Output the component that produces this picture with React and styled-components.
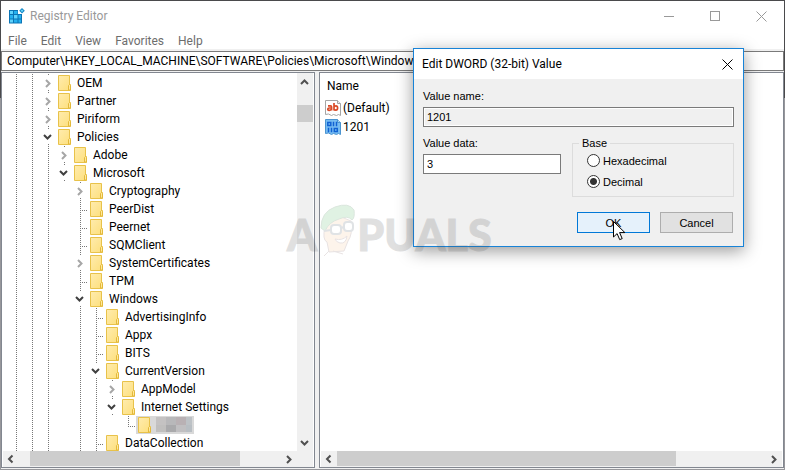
import React from "react";
import styled, { createGlobalStyle, css } from "styled-components";

const UI = 'Roboto, "Open Sans", sans-serif';
const DIALOG = '"Liberation Sans", Arial, sans-serif';

const GlobalStyle = createGlobalStyle`
  * { box-sizing: border-box; }
  body { margin: 0; font: 12px/18px ${UI}; color: #000; }
  button, input { font: inherit; color: inherit; margin: 0; }
  button { border: 0; padding: 0; background: none; }
`;

const Desktop = styled.div`
  min-height: 100vh;
  display: flex;
  padding: 1px;
  background: linear-gradient(#4a4a4c 0 98px, #97979b 98px);
`;

const Window = styled.main`
  position: relative;
  flex: 1;
  min-width: 0;
  display: flex;
  flex-direction: column;
  background: #f0f0f0;
`;

const TitleBar = styled.header`
  display: flex;
  align-items: center;
  height: 30px;
  padding-left: 8px;
  background: #fff;
  color: #999;
`;

const Title = styled.h1`
  flex: 1;
  margin: 0;
  padding-left: 5px;
  font-size: 12px;
  font-weight: 400;
`;

const CaptionButton = styled.button`
  display: grid;
  place-items: center;
  width: 46px;
  height: 30px;
`;

const MenuBar = styled.nav`
  display: flex;
  gap: 14px;
  height: 18px;
  padding: 1px 7px 0;
  margin-bottom: 2px;
  background: #fff;
  color: #6d6d6d;
`;

const MenuItem = styled.button`
  line-height: 18px;
`;

const AddressBar = styled.input`
  width: 100%;
  height: 20px;
  padding: 0 5px;
  border: 1px solid #7a7a7a;
  background: #fff;
  margin-bottom: 1px;
  outline: 0;
`;

const Panes = styled.div`
  flex: 1;
  min-height: 0;
  display: flex;
  gap: 4px;
  padding-bottom: 1px;
`;

const Pane = styled.section`
  display: flex;
  flex-direction: column;
  min-width: 0;
  border: 1px solid #828790;
  padding: 0 1px;
  background: #fff;
  ${(p) => (p.$fixed ? "width: 314px; flex: none;" : "flex: 1;")}
`;

const PaneBody = styled.div`
  flex: 1 1 0;
  min-height: 0;
  display: flex;
`;

const Tree = styled.ul`
  flex: 1;
  min-width: 0;
  overflow: hidden;
  margin: 0;
  padding: 1px 0 0 5px;
  list-style: none;
`;

const TreeRow = styled.li`
  display: flex;
  height: 18px;
`;

const dotsDown = "repeating-linear-gradient(#777 0 1px, transparent 1px 2px)";
const dotsAcross = "repeating-linear-gradient(90deg, #777 0 1px, transparent 1px 2px)";

const Guide = styled.span`
  flex: none;
  width: 16px;
  height: 18px;
  background: ${(p) => {
    const line = `${dotsDown} 8px 0 / 1px ${p.$half ? 10 : 18}px no-repeat`;
    if (p.$blank) return "none";
    return p.$branch ? `${line}, ${dotsAcross} 8px 10px / 8px 1px no-repeat` : line;
  }};
`;

const Toggle = styled.button`
  display: grid;
  place-items: center;
  width: 16px;
  height: 14px;
  margin-top: 2px;
  background: #fff;
`;

const Node = styled.span`
  display: flex;
  height: 18px;
  padding: 0 3px 0 2px;
  ${(p) => p.$selected && css`background: #d9d9d9; padding-right: 2px;`}
`;

const NodeLabel = styled.span`
  padding-left: 6px;
  line-height: 18px;
  white-space: nowrap;
`;

const Mosaic = styled.span`
  display: grid;
  grid-template-columns: repeat(4, 10px);
  width: 36px;
  height: 15px;
  margin: 1px 0 0 5px;
  overflow: hidden;
`;

const Tile = styled.span`
  background: ${(p) => p.$tone};
`;

const ScrollBar = styled.div`
  display: flex;
  flex: none;
  background: #f0f0f0;
  ${(p) =>
    p.$vertical
      ? "flex-direction: column; width: 16px; padding-top: 2px;"
      : `height: 16px; padding-right: ${p.$corner ? 16 : 0}px;`}
`;

const ScrollButton = styled.button`
  display: grid;
  place-items: center;
  flex: none;
  width: 16px;
  height: 16px;
`;

const Track = styled.div`
  flex: 1;
  padding: ${(p) => p.$inset || "0"};
`;

const Thumb = styled.div`
  background: #cdcdcd;
  width: ${(p) => p.$width || "100%"};
  height: ${(p) => p.$height || "15px"};
`;

const Values = styled.table`
  align-self: flex-start;
  border-collapse: collapse;
  margin: 2px 0 0 4px;

  th, td { padding: 0; height: 19px; font-weight: 400; text-align: left; }
  th { height: 23px; padding: 0 0 2px 2px; }
`;

const ValueName = styled.span`
  display: flex;
  align-items: center;
  gap: 2px;
`;

const Dialog = styled.form`
  position: absolute;
  top: 47px;
  right: 40px;
  width: 331px;
  border: 1px solid #1883d7;
  background: #f0f0f0;
  box-shadow: 0 4px 16px rgba(0, 0, 0, 0.4);
  font: 12px/14px ${DIALOG};
`;

const DialogBar = styled.div`
  display: flex;
  align-items: center;
  justify-content: space-between;
  height: 30px;
  padding: 0 8px;
  background: #fff;
  font: 12px/18px ${UI};
`;

const DialogTitle = styled.h2`
  margin: 0;
  font-size: 12px;
  font-weight: 400;
`;

const DialogClose = styled.button`
  display: grid;
  place-items: center;
  width: 15px;
  height: 15px;
`;

const DialogBody = styled.div`
  padding: 10px 9px 13px;
  font-size: 11px;
`;

const Field = styled.label`
  display: block;
`;

const TextBox = styled.input`
  display: block;
  width: 100%;
  height: 20px;
  margin-top: 4px;
  padding: 0 3px;
  border: 1px solid #7a7a7a;
  border-radius: 0;
  outline: 0;
  background: ${(p) => (p.readOnly ? "#f0f0f0" : "#fff")};
  box-shadow: inset 0 0 0 1px #fff;
`;

const FieldRow = styled.div`
  display: grid;
  grid-template-columns: 138px 1fr;
  gap: 11px;
  margin-top: 9px;
`;

const Group = styled.fieldset`
  margin: 0;
  padding: 0 14px 4px;
  min-width: 0;
  border: 1px solid #dcdcdc;

  legend { margin-left: -8px; padding: 0 3px; }
`;

const RadioRow = styled.label`
  display: flex;
  align-items: center;
  gap: 3px;
  height: 21px;
`;

const Radio = styled.input`
  appearance: none;
  width: 13px;
  height: 13px;
  border: 1px solid #333;
  border-radius: 50%;
  background: #fff;

  &:checked { background: radial-gradient(circle, #333 0 3px, #fff 4px); }
`;

const Actions = styled.div`
  display: flex;
  justify-content: flex-end;
  gap: 10px;
  padding: 15px 1px 0 0;
`;

const PushButton = styled.button`
  width: 73px;
  height: 21px;
  border: 1px solid ${(p) => (p.$primary ? "#0078d7" : "#adadad")};
  background: ${(p) => (p.$primary ? "#e5f1fb" : "#e1e1e1")};
`;

const Pointer = styled.svg`
  position: absolute;
  right: 158px;
  top: 220px;
  pointer-events: none;
`;

const Watermark = styled.div`
  position: absolute;
  left: 286px;
  top: 203px;
  display: flex;
  align-items: flex-end;
  opacity: 0.16;
  pointer-events: none;
  font: 900 43px/42px Lato, sans-serif;
  color: #444;
  -webkit-text-stroke: 1px #444;
`;

const stroke = { fill: "none", strokeWidth: 2 };

const Arrow = ({ dir, color = "#505050" }) => {
  const d = {
    up: "M1 6 4.500 2.500 8 6",
    down: "M1 3 4.5 6.5 8 3",
    left: "M6.5 1.5 3 5 6.5 8.5",
    right: "M3 2 6.500 5.500 3 9",
  }[dir];
  return (
    <svg width="10" height="10" viewBox="0 0 10 10" {...stroke} stroke={color}>
      <path d={d} />
    </svg>
  );
};

const Folder = () => (
  <svg width="13" height="18" viewBox="0 0 13 18">
    <defs>
      <linearGradient id="paper" x2="1" y2="1">
        <stop stopColor="#ffecae" />
        <stop offset="1" stopColor="#fddf7c" />
      </linearGradient>
    </defs>
    <path d="M.5 1.5h11v9h1v6H.5z" fill="url(#paper)" stroke="#e8c24a" />
    <path d="M10.5 16V11.5l1-1 1 1V16z" fill="#ffe89b" stroke="#e3b93b" />
  </svg>
);

const RegistryIcon = () => (
  <svg width="16" height="16" viewBox="0 0 16 16">
    <path d="M0 2h9v4h4v9.500H0z" fill="#0b74b5" />
    <path d="M1 3h3v3H1zM1 11.500h3v3H1zM5 7h3.500v3.500H5z" fill="#5fd2fb" />
    <path d="M5 3h3.500v3H5zM1 7h3v3.500H1zM5 11.500h3.500v3H5zM9.500 7h2.500v3.500H9.500zM9.500 11.500h2.500v3H9.500z" fill="#25b0ee" />
    <path d="M13 0 15.800 2.800 13 5.600 10.200 2.800z" fill="#1387c6" />
    <path d="M13 1.500 14.300 2.800 13 4.100 11.700 2.800z" fill="#6fdcff" />
  </svg>
);

const StringIcon = () => (
  <svg width="16" height="16" viewBox="0 0 16 16">
    <path d="M.5.5h12l3 3v12l-2-1-2 1-3-1-2 1-3-1.500-3 .5z" fill="#fff" stroke="#a5a5a5" />
    <path d="M12.500.5v3h3" fill="#eee" stroke="#a5a5a5" />
    <g fill="none" stroke="#da4b28" strokeWidth="1.700">
      <path d="M3 5.800h2.500Q6.600 5.800 6.600 7v3.500M6.600 8H4.200Q2.800 8 2.800 9.200T4.200 10.300 6.600 9.400" />
      <path d="M9 3v7.500M9 7q.6-1.200 1.900-1.200Q12.600 5.800 12.600 8T10.900 10.200 9 9" />
    </g>
  </svg>
);

const BinaryIcon = () => (
  <svg width="16" height="16" viewBox="0 0 16 16">
    <path d="M.5.5h12l3 3v12l-2-1-2 1-3-1-2 1-3-1.500-3 .5z" fill="#77bdf2" stroke="#4b94d0" />
    <path d="M12.500.5v3h3" fill="#a7d8fa" stroke="#4b94d0" />
    <g fill="none" stroke="#1062d3" strokeWidth="1.500">
      <path d="M2.800 3.500h3v3h-3zM8.500 2.800v4.500M11.500 2.800v4.500M3.500 8.800v4.500M6.500 8.800v4.500M9.300 9.500h3v3h-3z" />
    </g>
  </svg>
);

const Mascot = () => (
  <svg width="40" height="52" viewBox="0 0 40 52">
    <path d="M8 22Q5 36 10 38l2 10 15-1 4-10q5-7 3-20L22 12z" fill="#f6bd8a" stroke="#755" />
    <path d="M4 24Q4 8 18 3q14-5 19 3 1 8-2 10-4-5-13-1Q12 18 8 27z" fill="#43b45a" stroke="#286b37" />
    <g fill="#fff" stroke="#456" strokeWidth="2">
      <rect x="14" y="21" width="10" height="9" rx="3" />
      <rect x="27" y="18" width="9" height="9" rx="3" />
    </g>
    <path d="m24 24 3-1M14 26l-7 1" stroke="#456" strokeWidth="2" />
    <path d="M18 35q7 2 12-3-1 8-7 7-4-1-5-4z" fill="#fff" stroke="#755" />
    <path d="M12 47 7 52M16 47l10 3" stroke="#755" />
  </svg>
);

const CloseGlyph = ({ color }) => (
  <svg width="11" height="11" viewBox="0 0 11 11" stroke={color} fill="none">
    <path d="m.5.5 10 10m0-10-10 10" />
  </svg>
);

/* guides: "|" continues a line, "." leaves the column empty */
const rows = [
  ["||", "closed", "OEM"],
  ["||", "closed", "Partner"],
  ["||", "closed", "Piriform"],
  ["||", "open", "Policies"],
  ["|||", "closed", "Adobe"],
  ["|||", "open", "Microsoft"],
  ["|||.", "closed", "Cryptography"],
  ["|||.", "leaf", "PeerDist"],
  ["|||.", "leaf", "Peernet"],
  ["|||.", "leaf", "SQMClient"],
  ["|||.", "closed", "SystemCertificates"],
  ["|||.", "leaf", "TPM"],
  ["|||.", "open", "Windows"],
  ["|||.|", "leaf", "AdvertisingInfo"],
  ["|||.|", "leaf", "Appx"],
  ["|||.|", "leaf", "BITS"],
  ["|||.|", "open", "CurrentVersion"],
  ["|||.||", "closed", "AppModel"],
  ["|||.||", "open", "Internet Settings"],
  ["|||.||.", "last", null],
  ["|||.|", "leaf", "DataCollection"],
];

const tones = ["#c4c2c2", "#b8b8ba", "#b9b1b4", "#bdc2c6", "#c0bfbe", "#aaaaac", "#c0bfc1", "#b8bec3"];

const KeyRow = ({ guides, kind, label }) => (
  <TreeRow role="treeitem" aria-level={guides.length} aria-selected={!label}>
    {[...guides].map((g, i) => (
      <Guide key={i} $blank={g === "."} />
    ))}
    {kind === "open" || kind === "closed" ? (
      <Guide>
        <Toggle type="button" aria-label={`Toggle ${label}`}>
          <Arrow dir={kind === "open" ? "down" : "right"} color={kind === "open" ? "#404040" : "#a6a6a6"} />
        </Toggle>
      </Guide>
    ) : (
      <Guide $branch $half={kind === "last"} />
    )}
    <Node $selected={!label}>
      <Folder />
      {label ? (
        <NodeLabel>{label}</NodeLabel>
      ) : (
        <Mosaic>
          {tones.map((t, i) => (
            <Tile key={i} $tone={t} />
          ))}
        </Mosaic>
      )}
    </Node>
  </TreeRow>
);

const HorizontalScroll = ({ corner, inset, width }) => (
  <ScrollBar $corner={corner}>
    <ScrollButton aria-label="Scroll left"><Arrow dir="left" /></ScrollButton>
    <Track $inset={inset}><Thumb $width={width} /></Track>
    <ScrollButton aria-label="Scroll right"><Arrow dir="right" /></ScrollButton>
  </ScrollBar>
);

export default function App() {
  return (
    <Desktop>
      <GlobalStyle />
      <Window>
        <TitleBar>
          <RegistryIcon />
          <Title>Registry Editor</Title>
          <CaptionButton aria-label="Minimize">
            <svg width="10" height="1"><rect width="10" height="1" fill="#999" /></svg>
          </CaptionButton>
          <CaptionButton aria-label="Maximize">
            <svg width="10" height="10"><rect x=".5" y=".5" width="9" height="9" fill="none" stroke="#999" /></svg>
          </CaptionButton>
          <CaptionButton aria-label="Close"><CloseGlyph color="#999" /></CaptionButton>
        </TitleBar>
        <MenuBar>
          {["File", "Edit", "View", "Favorites", "Help"].map((m) => (
            <MenuItem key={m}>{m}</MenuItem>
          ))}
        </MenuBar>
        <AddressBar
          aria-label="Address"
          defaultValue={"Computer\\HKEY_LOCAL_MACHINE\\SOFTWARE\\Policies\\Microsoft\\Windows"}
        />
        <Panes>
          <Pane $fixed>
            <PaneBody>
              <Tree role="tree" aria-label="Registry keys">
                {rows.map(([guides, kind, label], i) => (
                  <KeyRow key={i} guides={guides} kind={kind} label={label} />
                ))}
              </Tree>
              <ScrollBar $vertical>
                <ScrollButton aria-label="Scroll up"><Arrow dir="up" /></ScrollButton>
                <Track $inset="14px 0 0"><Thumb $height="17px" /></Track>
                <ScrollButton aria-label="Scroll down"><Arrow dir="down" /></ScrollButton>
              </ScrollBar>
            </PaneBody>
            <HorizontalScroll corner inset="0 0 0 11px" width="210px" />
          </Pane>
          <Pane>
            <PaneBody>
              <Values>
                <thead>
                  <tr><th scope="col">Name</th></tr>
                </thead>
                <tbody>
                  <tr><td><ValueName><StringIcon />(Default)</ValueName></td></tr>
                  <tr><td><ValueName><BinaryIcon />1201</ValueName></td></tr>
                </tbody>
              </Values>
            </PaneBody>
            <HorizontalScroll width="79%" />
          </Pane>
        </Panes>

        <Dialog role="dialog" aria-labelledby="dialog-title" onSubmit={(e) => e.preventDefault()}>
          <DialogBar>
            <DialogTitle id="dialog-title">Edit DWORD (32-bit) Value</DialogTitle>
            <DialogClose type="button" aria-label="Close dialog"><CloseGlyph color="#000" /></DialogClose>
          </DialogBar>
          <DialogBody>
            <Field>
              Value name:
              <TextBox readOnly value="1201" />
            </Field>
            <FieldRow>
              <Field>
                Value data:
                <TextBox defaultValue="3" />
              </Field>
              <Group>
                <legend>Base</legend>
                <RadioRow><Radio type="radio" name="base" />Hexadecimal</RadioRow>
                <RadioRow><Radio type="radio" name="base" defaultChecked />Decimal</RadioRow>
              </Group>
            </FieldRow>
            <Actions>
              <PushButton $primary>OK</PushButton>
              <PushButton type="button">Cancel</PushButton>
            </Actions>
          </DialogBody>
        </Dialog>

        <Watermark aria-hidden="true">
          A<Mascot />PUALS
        </Watermark>
        <Pointer width="13" height="20" viewBox="0 0 13 20">
          <path d="M.5.5v15.500l3.600-3.400 2.600 6 2.500-1-2.600-6h5.300z" fill="#fff" stroke="#000" />
        </Pointer>
      </Window>
    </Desktop>
  );
}
